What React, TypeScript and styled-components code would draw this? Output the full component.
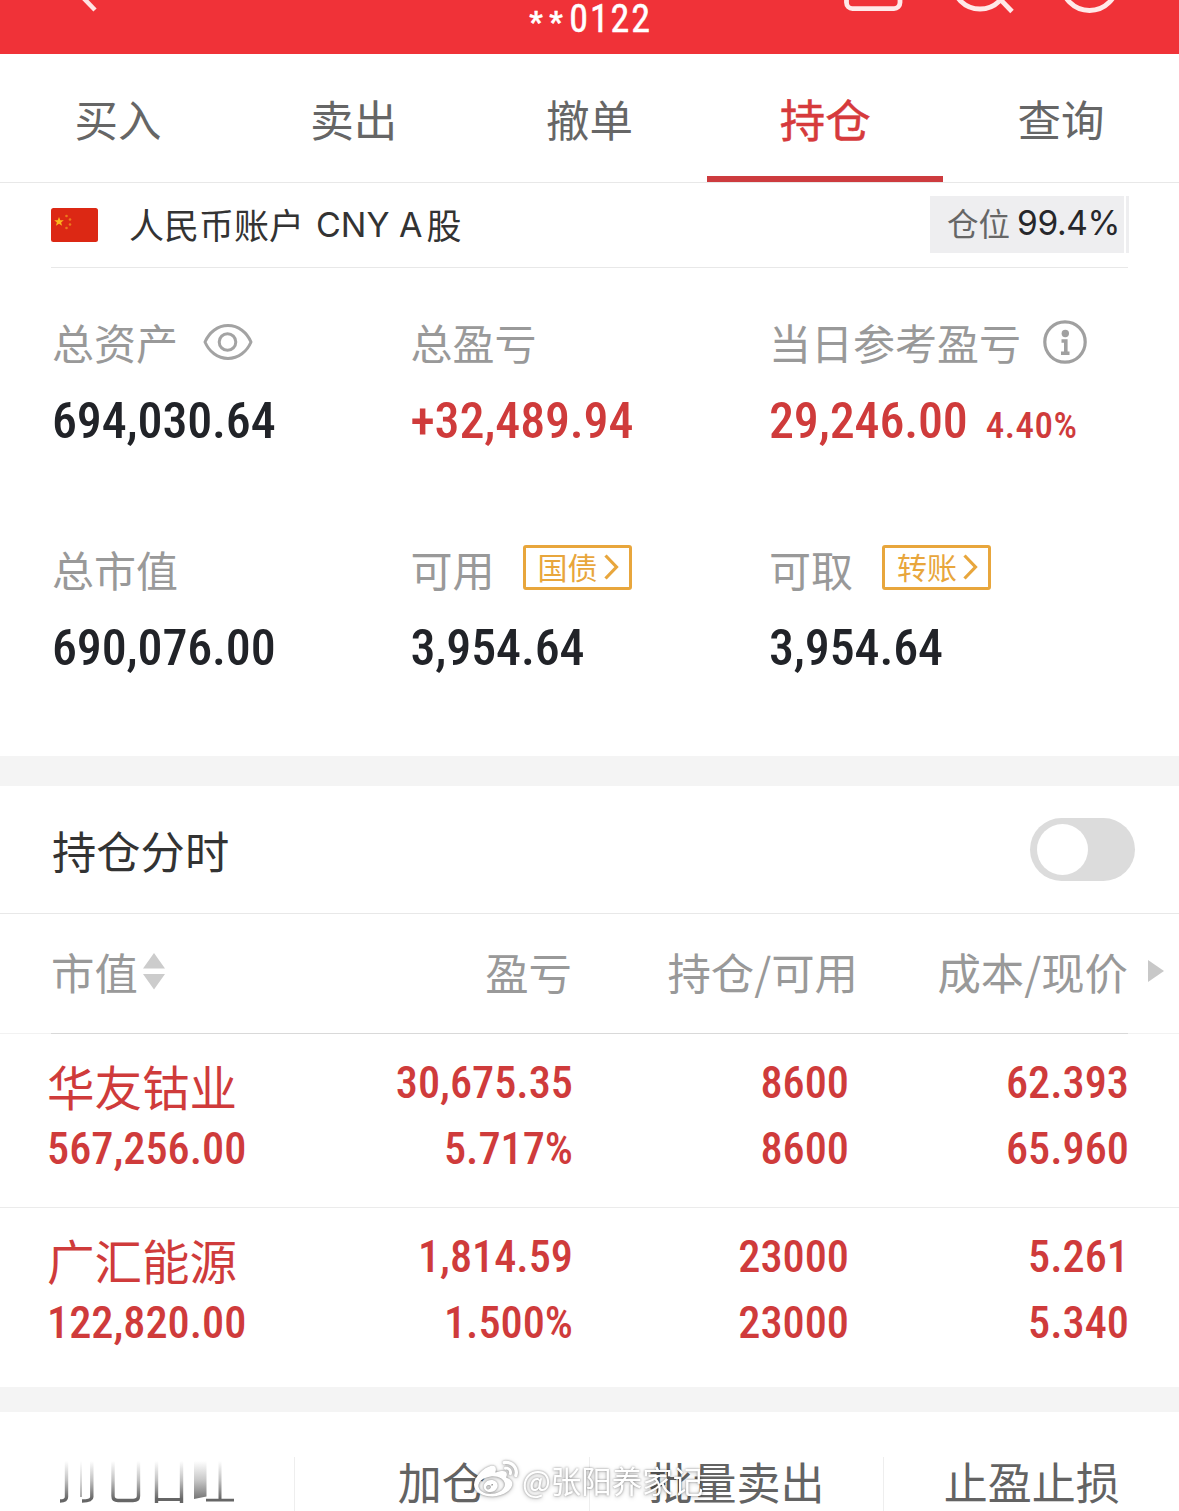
import React from "react";
import styled, { createGlobalStyle } from "styled-components";
import { FaWeibo } from "react-icons/fa";

const CJK = `"Noto Sans CJK SC", sans-serif`;
const NUM = `"Roboto Condensed", Roboto, "Liberation Sans", sans-serif`;
const RED = "#cf3b3b";
const GREY = "#999";

const Global = createGlobalStyle`
  *, *::before, *::after { box-sizing: border-box; }
  body { margin: 0; background: #fff; }
`;

const Screen = styled.div`
  position: relative;
  width: 1179px;
  height: 1511px;
  overflow: hidden;
  display: flex;
  flex-direction: column;
  background: #fff;
  font-family: ${CJK};
  white-space: nowrap;
`;

const Header = styled.header`
  height: 54px;
  flex: none;
  display: flex;
  justify-content: space-between;
  background: #f03238;
`;

const HeaderSide = styled.div`
  width: 360px;
  height: 54px;
  svg { display: block; }
`;

const AccountNo = styled.div`
  display: flex;
  height: 38px;
  padding-left: 2px;
  line-height: 38px;
  font-family: ${NUM};
  font-size: 38px;
  font-weight: 400;
  -webkit-text-stroke: 0.5px #fff;
  letter-spacing: 1.9px;
  color: #fff;
`;

const Mask = styled.span`
  padding-top: 3px;
  font-size: 30px;
  font-weight: 600;
  letter-spacing: 6.6px;
`;

const Tabs = styled.nav`
  display: grid;
  grid-template-columns: repeat(5, 1fr);
  height: 129px;
  flex: none;
  border-bottom: 1px solid #e8e8e8;
`;

const Tab = styled.div<{ $active?: boolean }>`
  display: flex;
  align-items: center;
  justify-content: center;
  font-size: ${(p) => (p.$active ? 45.5 : 43.5)}px;
  line-height: 60px;
  padding-top: ${(p) => (p.$active ? 5 : 1)}px;
  color: ${(p) => (p.$active ? "#d63a3c" : "#666")};
  -webkit-text-stroke: ${(p) => (p.$active ? "0.5px #d63a3c" : "0")};
  border-bottom: ${(p) => (p.$active ? "6px solid #cd3b3e" : "0")};
`;

const AccountRow = styled.div`
  display: flex;
  align-items: center;
  height: 85px;
  flex: none;
  margin: 0 51px;
  border-bottom: 1px solid #e8e8e8;
`;

const AccountName = styled.div`
  display: flex;
  margin-left: 31px;
  font-size: 35px;
  line-height: 48px;
  padding-bottom: 2px;
  color: #333;
`;

const Latin = styled.span`
  font-family: Inter, "Liberation Sans", sans-serif;
  font-size: 34px;
  font-weight: 400;
  margin: 1px 4px 0 12px;
`;

const PositionBadge = styled.div`
  display: flex;
  align-items: center;
  gap: 7px;
  width: 199px;
  height: 57px;
  margin: -2px -1px 0 auto;
  padding: 0 0 4px 17px;
  background: linear-gradient(90deg, #eeeef0 194px, #fff 194px, #fff 196px, #eeeef0 196px);
  color: #666;
  font-size: 31.5px;
  line-height: 50px;
`;

const Percent = styled.span`
  padding-top: 1px;
  font-family: Inter, "Liberation Sans", sans-serif;
  font-size: 33.5px;
  letter-spacing: -0.4px;
  color: #26272b;
`;

const Summary = styled.section`
  display: grid;
  grid-template-columns: 358.5px 358.5px 1fr;
  grid-template-rows: 138px 138px;
  row-gap: 88.5px;
  height: 488px;
  flex: none;
  padding: 44px 0 0 52px;
`;

const Stat = styled.div`
  display: flex;
  flex-direction: column;
  gap: 18px;
`;

const StatLabel = styled.div<{ $gap?: number }>`
  display: flex;
  align-items: center;
  gap: ${(p) => p.$gap ?? 0}px;
  height: 60px;
  font-size: 42px;
  line-height: 60px;
  color: ${GREY};
  svg { display: block; }
`;

const StatValue = styled.div<{ $up?: boolean }>`
  display: flex;
  align-items: baseline;
  gap: 18px;
  font-family: ${NUM};
  font-size: 50px;
  font-weight: 500;
  line-height: 62px;
  letter-spacing: -0.15px;
  color: ${(p) => (p.$up ? RED : "#212328")};
`;

const Rate = styled.span`
  font-size: 37px;
  letter-spacing: 0.5px;
`;

const Tag = styled.button`
  display: flex;
  align-items: center;
  gap: 6px;
  width: 109px;
  height: 45px;
  margin-top: -3px;
  padding: 0 0 2px 12px;
  border: 3px solid #e8a63c;
  border-radius: 3px;
  background: none;
  font-family: ${CJK};
  font-size: 30px;
  line-height: 36px;
  color: #e8a63c;
  svg { margin-top: 2px; }
`;

const Band = styled.div<{ $h: number }>`
  height: ${(p) => p.$h}px;
  flex: none;
  background: #f4f4f4;
`;

const SectionBar = styled.div`
  display: flex;
  align-items: center;
  justify-content: space-between;
  height: 128px;
  flex: none;
  padding: 0 44px 0 52px;
  border-bottom: 1px solid #e8e8e8;
  font-size: 44.3px;
  line-height: 60px;
  color: #333;
`;

const Switch = styled.div`
  width: 105px;
  height: 63px;
  padding: 6px 7px;
  border-radius: 32px;
  background: #dcdcdc;
`;

const Knob = styled.div`
  width: 51px;
  height: 51px;
  border-radius: 50%;
  background: #fff;
`;

const TableHead = styled.div`
  display: grid;
  grid-template-columns: 261px 260px 286px 270px 36px;
  height: 119px;
  flex: none;
  padding: 0 0 5px 51px;
  align-items: center;
  font-size: 43.4px;
  line-height: 60px;
  color: ${GREY};
  svg { display: block; }
`;

const HeadCell = styled.div<{ $end?: boolean }>`
  display: flex;
  align-items: center;
  justify-content: ${(p) => (p.$end ? "flex-end" : "flex-start")};
  gap: 5px;
  height: 60px;
`;

const HeadRule = styled.div`
  height: 1px;
  flex: none;
  background: linear-gradient(90deg, #f2f2f2 51px, #d9d9d9 51px, #d9d9d9 1128px, #f2f2f2 1128px);
`;

const Holding = styled.div<{ $last?: boolean }>`
  display: grid;
  grid-template-columns: 265px 261px 276px 280px;
  align-content: start;
  height: ${(p) => (p.$last ? 179 : 174)}px;
  flex: none;
  padding: 16px 0 0 47px;
  border-bottom: ${(p) => (p.$last ? "0" : "1px solid #ebebeb")};
  color: ${RED};
`;

const Cell = styled.div<{ $end?: boolean }>`
  text-align: ${(p) => (p.$end ? "right" : "left")};
  font-family: ${NUM};
  font-size: 44.3px;
  font-weight: 500;
  line-height: 66px;
`;

const StockName = styled.div`
  height: 66px;
  padding-top: 6px;
  font-family: ${CJK};
  font-size: 47.5px;
  font-weight: 400;
  line-height: 60px;
`;

const Footer = styled.footer`
  display: grid;
  grid-template-columns: repeat(4, 1fr);
  height: 99px;
  flex: none;
  padding-top: 45px;
`;

const Action = styled.div`
  display: flex;
  justify-content: center;
  height: 54px;
  font-size: 44px;
  line-height: 49px;
  color: #636363;
  border-right: 1px solid #eee;
  &:last-child { border-right: 0; }
  svg { display: block; }
`;

const Watermark = styled.div`
  position: absolute;
  left: 474px;
  top: 1457px;
  display: flex;
  align-items: center;
  gap: 4px;
  height: 46px;
  font-size: 30.5px;
  line-height: 46px;
  color: #fff;
  filter: drop-shadow(0 0 1px rgba(0, 0, 0, 0.38)) drop-shadow(0 1px 2px rgba(0, 0, 0, 0.22));
`;

const LeftIcons = () => (
  <svg width="360" height="54" fill="none" stroke="#ffe3e3" strokeWidth="4.5">
    <path d="M66 -20 L95 10" />
  </svg>
);

const RightIcons = () => (
  <svg width="360" height="54" viewBox="819 0 360 54" fill="none" stroke="#ffe9e9" strokeWidth="4.8">
    <rect x="846.5" y="-30" width="53.5" height="38.6" rx="6" />
    <circle cx="980" cy="-18.500" r="27.500" />
    <path d="M998 -3 L1012 11.5" />
    <circle cx="1089.5" cy="-17.500" r="28" />
  </svg>
);

const Flag = () => (
  <svg width="47" height="34" viewBox="0 0 47 34">
    <rect width="47" height="34" rx="2.5" fill="#dc2814" />
    <path d="M8 9l1.300 3.200h3.500l-2.700 2.200 1 3.400L8 15.800l-3.100 2 1-3.400-2.700-2.200h3.500z" fill="#fbb71c" />
    <g fill="#ec7a1c">
      <circle cx="15.5" cy="8" r="1.3" />
      <circle cx="19" cy="11.500" r="1.3" />
      <circle cx="19" cy="16.500" r="1.3" />
      <circle cx="15.5" cy="20" r="1.3" />
    </g>
  </svg>
);

const Eye = () => (
  <svg width="50" height="38" viewBox="0 0 50 38" fill="none" stroke="#a3a3a3" strokeWidth="3">
    <path d="M2 19C6 9.5 14.5 2.500 25 2.500S44 9.5 48 19C44 28.500 35.500 35.500 25 35.500S6 28.500 2 19z" strokeLinejoin="round" />
    <circle cx="24.500" cy="19" r="8.300" />
  </svg>
);

const Info = () => (
  <svg width="44" height="44" viewBox="0 0 44 44" fill="none" stroke="#a0a0a0" strokeWidth="3.2">
    <circle cx="22" cy="22" r="20.2" />
    <circle cx="22.300" cy="13.500" r="3.700" fill="#a0a0a0" stroke="none" />
    <path d="M18.500 21H22.800V33M18 33.200H26.500" strokeWidth="3.600" />
  </svg>
);

const Chevron = () => (
  <svg width="15" height="26" viewBox="0 0 15 26" fill="none" stroke="#e8a63c" strokeWidth="3.2">
    <path d="M1.500 1.500L12.500 13L1.500 24.500" />
  </svg>
);

const Sorter = () => (
  <svg width="22" height="37" viewBox="0 0 22 37" fill="#ccc">
    <path d="M11 0L22 15.500H0zM0 21H22L11 36.500z" />
  </svg>
);

const More = () => (
  <svg width="16" height="22" viewBox="0 0 16 22" fill="#c8c8c8">
    <path d="M0 0L16 11L0 22z" />
  </svg>
);

const WipedLabel = () => (
  <svg width="294" height="54" viewBox="0 1457 294 54" fill="none" strokeLinejoin="round">
    <defs>
      <linearGradient id="wipe" gradientUnits="userSpaceOnUse" x1="0" y1="1461" x2="0" y2="1499">
        <stop offset="0" stopColor="#666" stopOpacity="0" />
        <stop offset="0.5" stopColor="#666" stopOpacity="0.4" />
        <stop offset="1" stopColor="#666" />
      </linearGradient>
    </defs>
    <g stroke="url(#wipe)" strokeWidth="3.4">
      <path d="M66.500 1461V1497Q66.500 1501 60 1501" />
      <path d="M81 1461V1497" strokeWidth="2" opacity="0.600" />
      <path d="M91.800 1461V1497Q91.800 1501 82 1501" />
      <path d="M113 1461V1496Q113 1500.500 118 1500.500H133Q138.500 1500.500 138.500 1496V1461" />
      <path d="M156.500 1461V1503M181.500 1461V1503" />
      <path d="M156.500 1499.500H181.500" strokeWidth="3" />
      <path d="M220 1461V1500" strokeWidth="3" />
    </g>
    <path d="M206 1500.200H234M156.500 1499.700H181.500" stroke="#666" strokeWidth="2.800" />
    <path d="M194 1461H206.500V1496.500L194 1499z" fill="url(#wipe)" opacity="0.900" />
  </svg>
);

const tabs = ["买入", "卖出", "撤单", "持仓", "查询"];

const holdings = [
  { name: "华友钴业", value: "567,256.00", cells: [["30,675.35", "5.717%"], ["8600", "8600"], ["62.393", "65.960"]] },
  { name: "广汇能源", value: "122,820.00", cells: [["1,814.59", "1.500%"], ["23000", "23000"], ["5.261", "5.340"]] },
];

export default function App() {
  return (
    <Screen>
      <Global />
      <Header>
        <HeaderSide><LeftIcons /></HeaderSide>
        <AccountNo><Mask>**</Mask>0122</AccountNo>
        <HeaderSide><RightIcons /></HeaderSide>
      </Header>
      <Tabs>
        {tabs.map((t) => <Tab key={t} $active={t === "持仓"}>{t}</Tab>)}
      </Tabs>
      <AccountRow>
        <Flag />
        <AccountName>人民币账户<Latin>CNY A</Latin>股</AccountName>
        <PositionBadge>仓位<Percent>99.4%</Percent></PositionBadge>
      </AccountRow>
      <Summary>
        <Stat>
          <StatLabel $gap={25}>总资产<Eye /></StatLabel>
          <StatValue>694,030.64</StatValue>
        </Stat>
        <Stat>
          <StatLabel>总盈亏</StatLabel>
          <StatValue $up>+32,489.94</StatValue>
        </Stat>
        <Stat>
          <StatLabel $gap={22}>当日参考盈亏<Info /></StatLabel>
          <StatValue $up>29,246.00<Rate>4.40%</Rate></StatValue>
        </Stat>
        <Stat>
          <StatLabel>总市值</StatLabel>
          <StatValue>690,076.00</StatValue>
        </Stat>
        <Stat>
          <StatLabel $gap={28}>可用<Tag>国债<Chevron /></Tag></StatLabel>
          <StatValue>3,954.64</StatValue>
        </Stat>
        <Stat>
          <StatLabel $gap={29}>可取<Tag>转账<Chevron /></Tag></StatLabel>
          <StatValue>3,954.64</StatValue>
        </Stat>
      </Summary>
      <Band $h={30} />
      <SectionBar>
        持仓分时
        <Switch><Knob /></Switch>
      </SectionBar>
      <TableHead>
        <HeadCell>市值<Sorter /></HeadCell>
        <HeadCell $end>盈亏</HeadCell>
        <HeadCell $end>持仓/可用</HeadCell>
        <HeadCell $end>成本/现价</HeadCell>
        <HeadCell $end><More /></HeadCell>
      </TableHead>
      <HeadRule />
      {holdings.map((h, i) => (
        <Holding key={h.name} $last={i === holdings.length - 1}>
          <Cell><StockName>{h.name}</StockName>{h.value}</Cell>
          {h.cells.map(([a, b], j) => (
            <Cell key={j} $end><div>{a}</div><div>{b}</div></Cell>
          ))}
        </Holding>
      ))}
      <Band $h={25} />
      <Footer>
        <Action><WipedLabel /></Action>
        <Action>加仓</Action>
        <Action>批量卖出</Action>
        <Action>止盈止损</Action>
      </Footer>
      <Watermark><FaWeibo size={44} /><span>@张阳养家记</span></Watermark>
    </Screen>
  );
}
